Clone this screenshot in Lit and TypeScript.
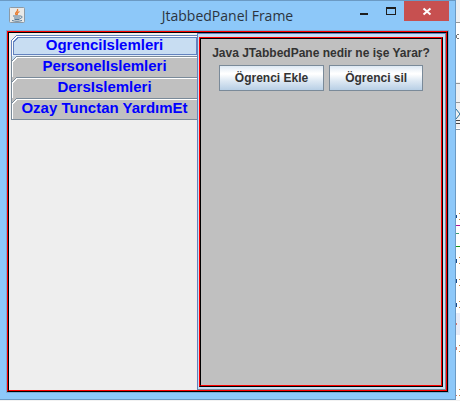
import { LitElement, html, css } from "lit";
import { customElement, state } from "lit/decorators.js";

@customElement("app-root")
export class AppRoot extends LitElement {
  @state() private selected = 0;

  private tabs = ["OgrenciIslemleri", "PersonelIslemleri", "DersIslemleri", "Ozay Tunctan YardımEt"];

  static styles = css`
    :host {
      display: flex;
      height: 100vh;
      box-sizing: border-box;
      padding-bottom: 1px;
      background: #f2f2f2;
      font-family: "Liberation Sans", Arial, sans-serif;
      overflow: hidden;
    }
    * { box-sizing: border-box; }
    button { font-family: inherit; margin: 0; padding: 0; border-radius: 0; }
    .window {
      flex: 1;
      min-width: 0;
      display: flex;
      flex-direction: column;
      background: #8dc8f9;
      border: 1px solid #6b9ac4;
      border-left: 0;
      padding: 0 6px 6px 6px;
    }
    .titlebar {
      display: grid;
      grid-template-columns: 98px 1fr 98px;
      height: 29px;
      flex: none;
    }
    .java { display: block; margin: 6px 0 0 3px; }
    h1 {
      margin: 0;
      text-align: center;
      font: 400 14px/29px "Open Sans", "Noto Sans", sans-serif;
      color: #2b3440;
      white-space: nowrap;
    }
    .controls { display: flex; justify-content: flex-end; align-items: flex-start; }
    .control { border: 0; background: none; width: 27px; height: 20px; display: block; }
    .control svg { display: block; margin: 0 auto; }
    .close { width: 45px; background: #c75050; }
    .client {
      flex: 1;
      min-height: 0;
      display: flex;
      border: 1px solid #76a9d3;
    }
    .bevel {
      border: 1px solid;
      border-color: #f00 #000 #000 #f00;
      display: flex;
      flex: 1;
      min-width: 0;
    }
    .bevel-in {
      border: 1px solid;
      border-color: #000 #f00 #f00 #000;
      flex: 1;
      min-width: 0;
      background: #eee;
    }
    .pane { display: flex; }
    .tabs {
      flex: none;
      width: 188px;
      padding: 2px 0 0 2px;
      display: flex;
      flex-direction: column;
    }
    .tab {
      position: relative;
      height: 21px;
      padding-bottom: 2px;
      border: 0;
      border-left: 1px solid #7a8a99;
      border-top: 1px solid #7a8a99;
      background: #c0c0c0;
      box-shadow: inset 1px 1px #fff;
      font-size: 15px;
      line-height: 18px;
      font-weight: 700;
      color: #00f;
      white-space: nowrap;
    }
    .tab:last-child { height: 22px; padding-bottom: 2px; border-bottom: 1px solid #7a8a99; }
    .tab.on {
      background: #c8ddf2;
      border-color: #6382bf;
      box-shadow: inset 1px 1px #fff, inset 0 -1px #e4edf7, inset -1px -2px #6382bf, inset 2px 2px #6382bf;
    }
    .corner { position: absolute; left: -1px; top: -1px; display: block; }
    .content {
      flex: 1;
      min-width: 0;
      display: flex;
      border: 1px solid #6382bf;
      border-right-color: #7a8a99;
      border-bottom-color: #7a8a99;
      background: #c8ddf2;
      padding: 3px 2px 2px 1px;
    }
    .panel {
      background: #c0c0c0;
      display: flex;
      flex-wrap: wrap;
      justify-content: center;
      align-content: flex-start;
      gap: 4px 5px;
      padding: 6px 4px;
    }
    .panel p {
      flex: 0 0 100%;
      margin: 0;
      text-align: center;
      font-size: 12px;
      line-height: 16px;
      font-weight: 700;
      color: #333;
      white-space: nowrap;
    }
    .action {
      height: 26px;
      padding: 0 15px;
      border: 1px solid #7a8a99;
      background: linear-gradient(#dde8f3 0%, #fff 30%, #fff 34%, #dde8f3 62%, #b8cfe5 100%);
      font-size: 12px;
      font-weight: 700;
      color: #333;
      white-space: nowrap;
    }
    .behind { flex: none; width: 4px; display: block; background: #fff; }
  `;

  private corner(i: number) {
    const on = i === this.selected;
    const above = i === 0 ? "#eee" : i - 1 === this.selected ? "#c8ddf2" : "#c0c0c0";
    const line = on ? "#6382bf" : "#7a8a99";
    return html`<svg class="corner" width="9" height="9" shape-rendering="crispEdges" aria-hidden="true">
      <path d="M0 0h6v1h-1v1h-1v1h-1v1h-1v1h-1v1h-1z" fill=${above} />
      <path d="M5 0h1v1h-1v1h-1v1h-1v1h-1v1h-1v1h-1v-1h1v-1h1v-1h1v-1h1v-1h1z" fill=${line} />
      <path d="M6 1h1v1h-1v1h-1v1h-1v1h-1v1h-1v1h-1v-2h1v-1h1v-1h1v-1h1v-1h1z" fill="#fff" />
      ${on
        ? html`<svg width="9" height="9"><path d="M6 2h2v1h-1v1h-1v1h-1v1h-1v1h-1v1h-1v-2h1v-1h1v-1h1v-1h1z" fill="#6382bf" /></svg>`
        : ""}
      <path d=${i === 0 ? "" : "M0 0h1v9h-1z"} fill="#7a8a99" />
    </svg>`;
  }

  render() {
    return html`
      <main class="window">
        <header class="titlebar">
          <svg class="java" width="17" height="18" viewBox="0 0 17 18" aria-hidden="true">
            <rect x=".5" y=".5" width="15" height="15" rx="1" fill="#e9e9e7" stroke="#8c9aa6" />
            <path d="M7.500 8C4.500 5.500 10 5 8.500 2M8.500 8C7.500 6.500 8.500 5.500 10.500 4.500" fill="none" stroke="#e8792b" stroke-width="1.300" />
            <path d="M4 9h7.500M5 11h6M5.500 12.500h5M11.500 9c2.500 0 1.500 2.500-.5 2.500M3 13.500c3 1 7 1 10 0" fill="none" stroke="#557896" />
          </svg>
          <h1>JtabbedPanel Frame</h1>
          <div class="controls">
            <button class="control" aria-label="Minimize">
              <svg width="27" height="20"><path d="M10 12h8v2h-8z" fill="#1e1e1e" /></svg>
            </button>
            <button class="control" aria-label="Maximize">
              <svg width="27" height="20"><path d="M9 6h10v8H9zM10 8v5h8V8z" fill="#1e1e1e" fill-rule="evenodd" /></svg>
            </button>
            <button class="control close" aria-label="Close">
              <svg width="45" height="20"><path d="M19.500 7.500l7 6M26.500 7.500l-7 6" stroke="#fff" stroke-width="2" /></svg>
            </button>
          </div>
        </header>
        <div class="client">
          <div class="bevel">
            <div class="bevel-in pane">
              <div class="tabs" role="tablist" aria-orientation="vertical">
                ${this.tabs.map(
                  (t, i) => html`<button
                    class="tab ${i === this.selected ? "on" : ""}"
                    role="tab"
                    aria-selected=${i === this.selected ? "true" : "false"}
                    @click=${() => (this.selected = i)}
                  >${this.corner(i)}${t}</button>`
                )}
              </div>
              <section class="content" role="tabpanel">
                <div class="bevel">
                  <div class="bevel-in panel">
                    <p>Java JTabbedPane nedir ne işe Yarar?</p>
                    <button class="action">Ögrenci Ekle</button>
                    <button class="action">Ögrenci sil</button>
                  </div>
                </div>
              </section>
            </div>
          </div>
        </div>
      </main>
      <svg class="behind" width="4" height="400" shape-rendering="crispEdges" aria-hidden="true">
        <path d="M0 0h4v22H0zM0 82h4v46H0z" fill="#f0f0f1" />
        <path d="M0 22h4v1H0zM0 83h4v1H0zM0 102h4v1H0z" fill="#999" />
        <path d="M0 120h4v1H0zM0 123h4v1H0z" fill="#444" />
        <path d="M0 129h4v1H0z" fill="#8899a8" />
        <path d="M0 109l4 5-4 5" fill="none" stroke="#26709c" stroke-width="1" shape-rendering="auto" />
        <path d="M1 34h2v1H1zM0 35h1v3H0zM1 38h2v1H1z" fill="#777" />
        <path d="M0 313h4v22H0z" fill="#e8ecf8" />
        <path d="M0 225h4v1H0z" fill="#b0189c" />
        <path d="M0 246h4v1H0z" fill="#189a18" />
        <path d="M0 215h1v3H0zM0 259h1v4H0zM0 279h1v4H0zM0 303h1v4H0z" fill="#174a8b" />
        <path d="M0 233h3v1H0z" fill="#3aa078" />
        <path d="M3 213h1v1H3zM3 219h1v1H3zM3 257h1v1H3zM3 263h1v1H3zM3 279h1v1H3zM3 285h1v1H3zM3 301h1v1H3zM3 307h1v1H3zM3 345h1v1H3zM3 351h1v1H3zM3 389h1v1H3zM3 395h1v1H3z" fill="#c98a45" />
        <path d="M0 323h1v2H0zM0 347h1v3H0zM0 395h1v1H0z" fill="#d87a70" />
      </svg>
    `;
  }
}
